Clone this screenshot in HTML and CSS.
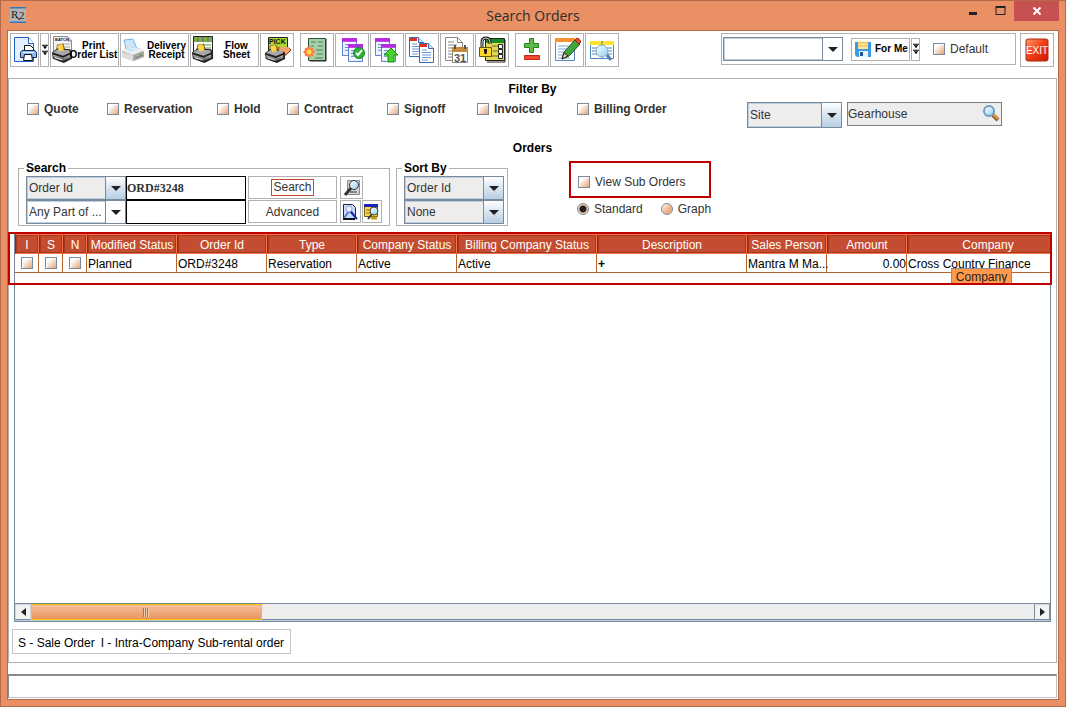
FILE: index.html
```html
<!DOCTYPE html>
<html lang="en">
<head>
<meta charset="utf-8">
<title>Search Orders</title>
<link rel="stylesheet" href="styles.css">
</head>
<body>
<svg class="sprite" aria-hidden="true">
  <defs>
    <linearGradient id="lens" x1="0" y1="0" x2="1" y2="1"><stop offset="0" stop-color="#fff"/><stop offset="1" stop-color="#8fd0ee"/></linearGradient>
    <linearGradient id="steel" x1="0" y1="0" x2="0" y2="1"><stop offset="0" stop-color="#b8b8b8"/><stop offset="1" stop-color="#555"/></linearGradient>
    <linearGradient id="exitred" x1="0" y1="0" x2="1" y2="1"><stop offset="0" stop-color="#ff9a6c"/><stop offset=".5" stop-color="#f03c14"/><stop offset="1" stop-color="#d01800"/></linearGradient>
    <symbol id="printer" viewBox="0 0 24 19" preserveAspectRatio="none">
      <path d="M6 8 7 2l6-1 2 6z" fill="#ffd34a" stroke="#7a5a10"/>
      <path d="M1 9 7 5l14 1 2 3v6l-9 4-12-4z" fill="#222"/>
      <path d="M2 9 7 6l13 1 1 2-8 3z" fill="#a8a8a8"/>
      <path d="M7 4 8 2l4-1 2 6-5 1z" fill="#ffd34a"/>
      <path d="m2 11 11 3 8-3v3l-8 3-10-3z" fill="url(#steel)"/>
      <path d="m4 14 8 2" stroke="#e0e0e0"/>
    </symbol>
    <symbol id="window" viewBox="0 0 16 19">
      <path d="M.5.5h15v18H.5z" fill="#eef5ff" stroke="#4a76c4"/>
      <path d="M0 0h16v4H0z" fill="#b52be0"/>
      <path d="M3 7h4M3 10h4M3 13h4M9 7h4M9 10h4M9 13h4" stroke="#5b86c8"/>
    </symbol>
    <symbol id="page" viewBox="0 0 15 20">
      <path d="M.5.5h9l5 5v14H.5z" fill="#fff" stroke="#3a68b4"/>
      <path d="M9.500.5v5h5" fill="#cfe0fa" stroke="#3a68b4"/>
      <path d="M1 1h7v3H1z" fill="#e03020"/>
      <path d="M3 7h5M3 9.500h9M3 12h9M3 14.500h9M3 17h6" stroke="#6f97d4"/>
    </symbol>
    <symbol id="chevrons" viewBox="0 0 7 12">
      <path d="M0 0h7v1H0zM1 1.500h5L3.500 5zM0 7h7v1H0zM1 8.500h5L3.500 12z" fill="#000"/>
    </symbol>
  </defs>
</svg>

<div class="window">
  <header class="titlebar">
    <svg class="app-icon" viewBox="0 0 16 16" role="img" aria-label="R2">
      <rect width="16" height="16" fill="#b4b4b4"/><path d="M0 0h16v1.500H0zM0 14.500h16V16H0z" fill="#2f78c0"/>
      <text class="app-mark" x="1" y="11">R</text><text class="app-mark" x="9" y="12">2</text><path d="m6 10 4 3" stroke="#222"/>
    </svg>
    <h1 class="title">Search Orders</h1>
    <div class="window-controls">
      <button class="win-btn" aria-label="Minimize"><svg width="9" height="12"><path d="M0 7h8v3H0z" fill="#222"/></svg></button>
      <button class="win-btn" aria-label="Maximize"><svg width="12" height="12"><path d="M1 2.500h9v7H1z" fill="none" stroke="#222"/><path d="M.5 1h10v2H.5z" fill="#222"/></svg></button>
      <button class="win-btn close" aria-label="Close"><svg width="8" height="8"><path d="m.5.5 7 7m0-7-7 7" stroke="#fff" stroke-width="2"/></svg></button>
    </div>
  </header>

  <main class="client">
    <div class="toolbar">
      <div class="tool-group">
        <button class="tool narrow" aria-label="Print"><svg width="24" height="28" viewBox="0 0 24 28"><path d="M1.500 1.500h14l5 6v18h-19z" fill="#e3efff" stroke="#1f5fc4"/><path d="M15.500 1.500v6h5" fill="#fff" stroke="#1f5fc4"/><path d="M11.500 9.500h6l3 3v5h-9z" fill="#fff" stroke="#111"/><path d="M9 14.500h13l1.500 2v5H7.500v-5z" fill="#8fb8ee" stroke="#12305e"/><path d="M11.500 18.500h7l1 6h-9z" fill="#fff" stroke="#111"/><path d="M10 16.500h11" stroke="#e4efff"/></svg></button>
        <button class="tool drop" aria-label="Print menu"><svg width="6" height="12"><use href="#chevrons"/></svg></button>
        <button class="tool wide"><svg width="24" height="28" viewBox="0 0 24 28"><path d="M2.500.5h14l4 4v18h-18z" fill="#f3f3f3" stroke="#888"/><path d="M17 1v4h4" fill="#ccc" stroke="#888"/><text class="tiny-mark" x="4" y="5">BATCH</text><path d="M11 8h8M12 11h7M15 14h4" stroke="#aaa"/><use href="#printer" y="7" width="22" height="20"/></svg><span class="caption overlap">Print<br>Order List</span></button>
        <button class="tool wide"><svg width="24" height="24" viewBox="0 0 24 24"><path d="m5 11-2-9 9-1 4 10z" fill="#c9e6fc" stroke="#78b4e0"/><path d="m1 13 7-4 13 2 2 3v5l-10 4L1 19z" fill="#a8a8a8"/><path d="m1 13 7-4 13 2 1 2-10 4z" fill="#eee"/><path d="M1 14v5l11 4v-6z" fill="#dcdcdc"/><path d="m5 12 2-2 8 1-4 3z" fill="#c9e6fc"/><circle cx="19" cy="16" r="1" fill="#44c030"/><path d="m14 20 8-3" stroke="#777"/></svg><span class="caption">Delivery<br>Receipt</span></button>
        <button class="tool wide"><svg width="24" height="28" viewBox="0 0 24 28"><path d="M2.500.5h19v16h-19z" fill="#fff" stroke="#222"/><path d="M3 1h18v5H3z" fill="#7fae3a"/><path d="M7 1v5M12 1v5M17 1v5" stroke="#5560a8"/><path d="M12 9h8M14 12h6" stroke="#4a9b42"/><use href="#printer" y="7" width="23" height="20"/></svg><span class="caption">Flow<br>Sheet</span></button>
        <button class="tool" aria-label="Pick"><svg width="28" height="28" viewBox="0 0 28 28"><path d="M5.500 1.500h19v14h-19z" fill="#a9d92f" stroke="#222"/><text class="pick-mark" x="6" y="8">PICK</text><path d="M14 12h12l2 2-5 5h-7z" fill="#f1a46b" stroke="#8c3a16"/><use href="#printer" x="1" y="8" width="22" height="19"/><path d="M17 11h9l1 3-5 2-6-1z" fill="#f1a46b"/></svg></button>
      </div>
      <div class="tool-group">
        <button class="tool" aria-label="Order sheet"><svg width="28" height="28" viewBox="0 0 28 28"><path d="M5.500 2.500h17v22h-17z" fill="#a5cfa8" stroke="#33523a"/><path d="M23 3v22H7" fill="none" stroke="#222"/><path d="M8 6h5M15 6h5M8 10h3M15 10h5M13 14h7M14 18h6M12 22h8" stroke="#4d8258"/><circle cx="6" cy="16" r="5" fill="#ff8b50"/><path d="M6 10v12M0 16h12M2 12l8 8M10 12l-8 8" stroke="#ff6a38"/><circle cx="6" cy="16" r="2.500" fill="#ffd94a"/></svg></button>
        <button class="tool" aria-label="Approve orders"><svg width="28" height="28" viewBox="0 0 28 28"><use href="#window" x="4" y="2" width="15" height="18"/><use href="#window" x="10" y="8" width="15" height="18"/><circle cx="21" cy="17" r="5.500" fill="#2fb437" stroke="#148420"/><path d="m18 17 2 2 4-5" fill="none" stroke="#fff" stroke-width="2"/></svg></button>
        <button class="tool" aria-label="Upload orders"><svg width="28" height="28" viewBox="0 0 28 28"><use href="#window" x="2" y="2" width="15" height="18"/><use href="#window" x="8" y="8" width="15" height="18"/><path d="m18 12 7 7h-4v7h-6v-7h-4z" fill="#47d32a" stroke="#208c12"/></svg></button>
        <button class="tool" aria-label="Copy"><svg width="28" height="28" viewBox="0 0 28 28"><use href="#page" x="1" y="1" width="15" height="20"/><use href="#page" x="11" y="7" width="15" height="20"/></svg></button>
        <button class="tool" aria-label="Schedule"><svg width="28" height="28" viewBox="0 0 28 28"><path d="M2.500 1.500h12l5 5v18h-17z" fill="#fff" stroke="#888"/><path d="M14.500 1.500v5h5M5 6h6M5 9h9M5 12h5M5 15h5M5 18h5M5 21h5" fill="none" stroke="#888"/><path d="M9.500 11.500h15v15h-15z" fill="#fff" stroke="#888"/><path d="M9 11h16v5H9z" fill="#c58a38"/><path d="M12 9v4M22 9v4" stroke="#555" stroke-width="2"/><text class="cal-mark" x="11" y="26">31</text></svg></button>
        <button class="tool" aria-label="Lock order"><svg width="28" height="28" viewBox="0 0 28 28"><path d="M7.500 2.500h19v22h-19z" fill="#e0d84e" stroke="#222"/><path d="M27 4v22H9" fill="none" stroke="#222"/><path d="M8 3h18v4H8z" fill="#148c24"/><path d="M14 10h6M15 15h5M14 20h6" stroke="#6b6720"/><path d="M20.500 8.500h4v4h-4zM20.500 13.500h4v4h-4zM20.500 18.500h4v4h-4z" fill="#fff" stroke="#222"/><path d="M4 11V6q0-4 4-4t4 4v2" fill="none" stroke="#222" stroke-width="3"/><path d="M4 11V6q0-4 4-4t4 4v2" fill="none" stroke="#c8c8c8"/><path d="M1.500 11.500h12v9h-12z" fill="#ffd42a" stroke="#6c5500"/><path d="M6 13h3v2L8.500 18h-2L6 15z" fill="#111"/></svg></button>
      </div>
      <div class="tool-group">
        <button class="tool" aria-label="Add or remove"><svg width="28" height="28" viewBox="0 0 28 28"><path d="M11.500 2.500h4v5h5v4h-5v5h-4v-5h-5v-4h5z" fill="#5cbc48" stroke="#258024"/><path d="M6.500 19.500h15v4h-15z" fill="#ef4a2c" stroke="#c22814"/></svg></button>
        <button class="tool" aria-label="Edit"><svg width="28" height="28" viewBox="0 0 28 28"><path d="M2.500 2.500h19v22h-19z" fill="#fff" stroke="#5b86c0"/><path d="M2 2h20v4H2z" fill="#ff8f35"/><path d="M5 10h11M5 13h10M5 16h7M5 19h5M5 22h12" stroke="#79a5dc"/><path d="m9 23 2-7L22 4l5 4-11 12z" fill="#3fa63c" stroke="#234d20"/><path d="m22 4 4 4 2-2q-1-3-4-4z" fill="#ef4a3a" stroke="#8e2118"/><path d="m9 23 2-6 4 3z" fill="#f4d0a0" stroke="#222"/></svg></button>
        <button class="tool" aria-label="Preview"><svg width="28" height="28" viewBox="0 0 28 28"><path d="M2.500 5.500h23v17h-23z" fill="#fff" stroke="#4a86c8"/><path d="M2 5h24v4H2z" fill="#ffe32a"/><path d="M14 5v18M4 12h7M4 15h6M4 18h7M19 12h5M20 15h4M19 18h5" stroke="#4a86c8"/><circle cx="14" cy="15" r="6" fill="url(#lens)" stroke="#8aa8bd"/><path d="m19 19 4 5" stroke="#5a7eb0" stroke-width="3"/></svg></button>
      </div>

      <div class="profile">
        <span class="combo profile-combo"><select aria-label="Saved profile"><option></option></select></span>
        <button class="for-me"><svg width="16" height="16" viewBox="0 0 16 16"><path d="M0 1h16v15H2l-2-2z" fill="#3c9be0"/><path d="M3 0h10v8H3z" fill="#ffe6a0"/><path d="M3 2h10M3 5h10" stroke="#f2b845"/><path d="M4 10h9v6H4z" fill="#e8f4ff"/><path d="M5 11h3v4H5z" fill="#1d5b96"/></svg>For Me</button>
        <button class="for-me-drop" aria-label="Save menu"><svg width="6" height="12"><use href="#chevrons"/></svg></button>
        <label class="check default"><input type="checkbox">Default</label>
      </div>
      <button class="tool exit" aria-label="Exit"><svg width="24" height="24" viewBox="0 0 24 24"><rect x="1" y="1" width="22" height="22" rx="2" fill="url(#exitred)" stroke="#a82810"/><text class="exit-mark" x="12" y="16">EXIT</text></svg></button>
    </div>

    <section class="panel">
      <h2 class="heading">Filter By</h2>
      <div class="filters">
        <label class="check w80"><input type="checkbox">Quote</label>
        <label class="check w110"><input type="checkbox">Reservation</label>
        <label class="check w70"><input type="checkbox">Hold</label>
        <label class="check w100"><input type="checkbox">Contract</label>
        <label class="check w90"><input type="checkbox">Signoff</label>
        <label class="check w100"><input type="checkbox">Invoiced</label>
        <label class="check"><input type="checkbox">Billing Order</label>
        <div class="site">
          <span class="combo shaded site-combo"><select aria-label="Scope"><option>Site</option></select></span>
          <span class="lookup"><input type="text" value="Gearhouse" aria-label="Site name"><button aria-label="Look up site"><svg width="18" height="18" viewBox="0 0 18 18"><path d="m11 11 5 5" stroke="#8b5a2b" stroke-width="4"/><path d="m11 10 5 5" stroke="#f09a3c" stroke-width="2"/><circle cx="7" cy="7" r="5" fill="url(#lens)" stroke="#6f9cc0" stroke-width="2"/></svg></button></span>
        </div>
      </div>

      <h2 class="heading">Orders</h2>
      <div class="criteria">
        <fieldset class="group">
          <legend>Search</legend>
          <div class="search-grid">
            <span class="combo shaded"><select aria-label="Search field"><option>Order Id</option></select></span>
            <input class="term" type="text" value="ORD#3248" aria-label="Search text">
            <button class="plain"><span class="focus">Search</span></button>
            <div class="icons"><button class="mini" aria-label="Find"><svg width="18" height="18" viewBox="0 0 18 18"><path d="M4.500 1.500h12v14h-12z" fill="#d5d5d5" stroke="#888"/><path d="M7 13h7" stroke="#333"/><path d="m8 9-6 7" stroke="#333" stroke-width="3"/><circle cx="11" cy="6" r="4.500" fill="url(#lens)" stroke="#333"/></svg></button></div>
            <span class="combo"><select aria-label="Match mode"><option>Any Part of ...</option></select></span>
            <input class="term" type="text" aria-label="Second search text">
            <button class="plain">Advanced</button>
            <div class="icons">
              <button class="mini" aria-label="Clear search"><svg width="18" height="18" viewBox="0 0 18 18"><path d="M2.500 1.500h9l3 3v11h-12z" fill="#c9d9ff" stroke="#222"/><path d="m3 15 6-8 4 5" fill="none" stroke="#5b78c8" stroke-width="2"/><path d="m9 8 7 8" stroke="#1a2fa0" stroke-width="2"/><circle cx="8" cy="6" r="3" fill="#eef4ff" stroke="#8fa4d8"/><path d="M2 16h12" stroke="#111" stroke-width="2"/></svg></button>
              <button class="mini" aria-label="Saved searches"><svg width="18" height="18" viewBox="0 0 18 18"><path d="M1.500 1.500h13v12h-13z" fill="#ffd84a" stroke="#6e5a14"/><path d="M1 1h14v3H1z" fill="#1a24b8"/><path d="M3 7h4M3 10h4" stroke="#8a6a10"/><path d="M8 15h6" stroke="#c49a14" stroke-width="3"/><path d="m9 11-4 5" stroke="#333" stroke-width="2"/><circle cx="11" cy="8" r="4" fill="url(#lens)" stroke="#444"/></svg></button>
            </div>
          </div>
        </fieldset>
        <fieldset class="group">
          <legend>Sort By</legend>
          <div class="sort-grid">
            <span class="combo shaded"><select aria-label="First sort"><option>Order Id</option></select></span>
            <span class="combo shaded"><select aria-label="Second sort"><option>None</option></select></span>
          </div>
        </fieldset>
        <div class="view">
          <div class="sub-orders"><label class="check"><input type="checkbox">View Sub Orders</label></div>
          <div class="modes">
            <label class="check"><input type="radio" name="mode" checked>Standard</label>
            <label class="check"><input type="radio" name="mode">Graph</label>
          </div>
        </div>
      </div>

      <div class="results">
        <div class="pane">
          <div class="table-view">
            <table class="orders">
              <colgroup><col class="c24"><col class="c24"><col class="c24"><col class="c90"><col class="c90"><col class="c90"><col class="c100"><col class="c140"><col class="c150"><col class="c80"><col class="c80"><col></colgroup>
              <thead><tr><th>I</th><th>S</th><th>N</th><th>Modified Status</th><th>Order Id</th><th>Type</th><th>Company Status</th><th>Billing Company Status</th><th>Description</th><th>Sales Person</th><th>Amount</th><th>Company</th></tr></thead>
              <tbody><tr>
                <td class="tick"><input type="checkbox" aria-label="Intra-company"></td>
                <td class="tick"><input type="checkbox" aria-label="Sale"></td>
                <td class="tick"><input type="checkbox" aria-label="N"></td>
                <td>Planned</td><td>ORD#3248</td><td>Reservation</td><td>Active</td><td>Active</td><td><b>+</b></td><td>Mantra M Ma...</td><td class="num">0.00</td><td>Cross Country Finance</td>
              </tr></tbody>
            </table>
          </div>
          <div class="scrollbar">
            <button class="arrow" aria-label="Scroll left"><svg width="5" height="8"><path d="M5 0v8L0 4z" fill="#222"/></svg></button>
            <div class="track"><div class="thumb"><span class="grip"></span></div></div>
            <button class="arrow right" aria-label="Scroll right"><svg width="5" height="8"><path d="M0 0v8l5-4z" fill="#222"/></svg></button>
          </div>
        </div>
        <div class="tooltip">Company</div>
        <div class="highlight"></div>
      </div>

      <p class="key"><span>S - Sale Order</span><span>I - Intra-Company Sub-rental order</span></p>
    </section>
    <input class="status" type="text" readonly aria-label="Status">
  </main>
</div>
</body>
</html>
```

FILE: styles.css
```css
* { box-sizing: border-box; }
body {
  margin: 0;
  font: 12px/16px "Liberation Sans", Arial, sans-serif;
  color: #333;
}
button, input, select { font: inherit; color: inherit; margin: 0; padding: 0; border-radius: 0; }
button { background: #fff; border: 1px solid #b0b0b0; }
h1, h2, p { margin: 0; }
svg { display: block; flex: none; }
.sprite { position: absolute; width: 0; height: 0; }

.window {
  min-height: 100vh;
  display: flex;
  flex-direction: column;
  padding: 0 6px 6px;
  background: #e99065;
  border: 1px solid #b36a4b;
}

/* Title bar */
.titlebar {
  display: grid;
  grid-template-columns: 1fr auto 1fr;
  align-items: start;
  height: 29px;
}
.app-icon { width: 16px; height: 16px; margin: 6px 0 0 3px; }
.app-mark { font: 11px "Liberation Serif", serif; fill: #222; }
.title { font: 14px/30px "Open Sans", sans-serif; color: #2b2b2b; }
.window-controls { display: flex; justify-content: flex-end; }
.win-btn {
  display: flex;
  align-items: center;
  justify-content: center;
  width: 27px;
  height: 20px;
  background: none;
  border: 0;
}
.win-btn.close { width: 45px; background: #c75050; }

.client {
  flex: 1;
  display: flex;
  flex-direction: column;
  background: #fff;
  border: 1px solid #b9694a;
}

/* Toolbar */
.toolbar { display: flex; padding: 2px 4px 11px 2px; }
.tool-group { display: flex; gap: 1px; margin-right: 6px; }
.tool {
  display: flex;
  align-items: center;
  justify-content: center;
  width: 34px;
  height: 34px;
  overflow: hidden;
}
.tool.narrow { width: 29px; }
.tool.drop { width: 9px; }
.tool.wide { width: 69px; justify-content: flex-start; }
.caption {
  flex: 1;
  font-weight: bold;
  font-size: 10px;
  line-height: 9px;
  color: #000;
  text-align: center;
  white-space: nowrap;
}
.caption.overlap { margin-left: -6px; }
.tiny-mark { font: bold 4px "Liberation Sans", sans-serif; fill: #111; }
.pick-mark { font: bold 7px "Liberation Sans", sans-serif; fill: #111; }
.cal-mark { font: bold 11px "Liberation Sans", sans-serif; fill: #555; }
.exit-mark { font: 10px "Liberation Sans", sans-serif; fill: #fff; text-anchor: middle; }
.profile {
  display: flex;
  align-items: center;
  width: 295px;
  height: 32px;
  margin: 0 4px 0 auto;
  padding: 0 1px;
  border: 1px solid #b0b0b0;
}
.profile-combo { width: 120px; height: 24px; }
.for-me {
  display: flex;
  align-items: center;
  gap: 4px;
  width: 59px;
  height: 23px;
  margin-left: 8px;
  padding-left: 3px;
  font-weight: bold;
  font-size: 10px;
  color: #000;
  white-space: nowrap;
}
.for-me-drop {
  display: flex;
  align-items: center;
  justify-content: center;
  width: 9px;
  height: 23px;
  margin-left: 1px;
}
.default { margin-left: 13px; }

/* Form controls */
.combo { position: relative; display: block; }
.combo select {
  appearance: none;
  display: block;
  width: 100%;
  height: 100%;
  padding: 0 20px 0 2px;
  background: #fff;
  border: 1px solid #7a8a99;
  box-shadow: inset 0 0 0 1px #b8cfe5;
}
.combo.shaded select { background: #ededed; }
.combo::before {
  content: "";
  position: absolute;
  top: 1px;
  right: 1px;
  bottom: 1px;
  width: 19px;
  background: #fff;
  border-left: 1px solid #7a8a99;
  pointer-events: none;
}
.combo.shaded::before { background: linear-gradient(#fff, #dfe9f3 40%, #b8cfe5); }
.combo::after {
  content: "";
  position: absolute;
  top: calc(50% - 2px);
  right: 5px;
  border: 5px solid transparent;
  border-top-color: #222;
  border-bottom: 0;
  pointer-events: none;
}
.check { display: flex; align-items: center; gap: 5px; height: 20px; white-space: nowrap; }
input[type="checkbox"], input[type="radio"] {
  appearance: none;
  flex: none;
  width: 12px;
  height: 12px;
  border: 1px solid #7a8a99;
  background: linear-gradient(135deg, #fff 25%, #e8a274);
  box-shadow: inset 1px 1px 0 #fff;
}
input[type="radio"] { border-radius: 50%; box-shadow: none; background: linear-gradient(135deg, #fff, #f0b088 60%); }
input[type="radio"]:checked { background: radial-gradient(circle, #222 3px, #f5c9ac 4px); }

/* Panel */
.panel {
  flex: 1;
  display: flex;
  flex-direction: column;
  margin: 0 1px 11px 0;
  padding: 0 5px 8px;
  border: 1px solid #b0b0b0;
}
.heading { font-size: 12px; line-height: 20px; color: #000; text-align: center; }
.filters {
  display: flex;
  align-items: flex-start;
  height: 39px;
  padding: 0 49px 0 13px;
  font-weight: bold;
}
.w70 { width: 70px; }
.w80 { width: 80px; }
.w90 { width: 90px; }
.w100 { width: 100px; }
.w110 { width: 110px; }
.site { display: flex; gap: 5px; margin-left: auto; padding-top: 3px; font-weight: normal; }
.site-combo { width: 95px; height: 26px; }
.lookup {
  display: flex;
  width: 155px;
  height: 24px;
  background: #ededed;
  border: 1px solid #808080;
}
.lookup input { flex: 1; min-width: 0; background: none; border: 0; }
.lookup button { padding: 0 1px 3px; background: none; border: 0; }

.criteria { display: flex; align-items: flex-start; gap: 6px; padding: 2px 0 6px 4px; }
.group { margin: 0; padding: 0 1px 1px 7px; border: 1px solid #b0b0b0; min-width: 0; }
.group legend { margin-left: -2px; padding: 0 2px; font-weight: bold; color: #000; }
.search-grid { display: grid; grid-template: 24px 24px / 100px 120px 89px 47px; width: 362px; }
.search-grid .plain { margin: 0 0 1px 2px; width: 89px; }
.focus { display: inline-block; padding: 0 1px; line-height: 15px; border: 1px solid #c44c30; }
.icons { display: flex; gap: 1px; padding: 0 0 1px 5px; }
.mini { display: flex; align-items: center; justify-content: center; width: 23px; height: 23px; }
.term {
  min-width: 0;
  border: 1px solid #000;
  font: bold 12px "Liberation Serif", "Times New Roman", serif;
}
.sort-grid { display: grid; grid-template: 24px 24px / 100px; width: 102px; }
.view { margin-left: 55px; }
.sub-orders {
  display: flex;
  align-items: center;
  width: 142px;
  height: 37px;
  margin-top: 1px;
  padding: 5px 0 0 7px;
  border: 2px solid #c00000;
}
.modes { display: flex; gap: 18px; padding: 1px 0 0 8px; }

/* Results */
.results { position: relative; flex: 1; display: flex; }
.pane {
  flex: 1;
  min-width: 0;
  display: flex;
  flex-direction: column;
  padding: 1px 0 0;
  border: 1px solid #7a8a99;
}
.table-view { flex: 1; overflow: hidden; }
.orders {
  width: max(100%, 1054px);
  table-layout: fixed;
  border-spacing: 0;
  color: #000;
}
.c24 { width: 24px; }
.c80 { width: 80px; }
.c90 { width: 90px; }
.c100 { width: 100px; }
.c140 { width: 140px; }
.c150 { width: 150px; }
.orders th {
  height: 20px;
  padding: 2px 0 0;
  font-weight: normal;
  color: #fff;
  background: #c44c30;
  border: 1px solid #ff7446;
  border-left-color: #8a2c18;
  box-shadow: inset 0 0 0 1px #a03a22;
  white-space: nowrap;
}
.orders td {
  height: 19px;
  padding: 1px 0 0 1px;
  border: 0 solid #b4652f;
  border-width: 0 1px 1px 0;
  white-space: nowrap;
}
.orders .tick { padding: 0; }
.tick input { display: block; margin: 0 auto; }
.orders .num { text-align: right; }
.highlight {
  position: absolute;
  top: 0;
  left: -6px;
  right: -1px;
  height: 53px;
  border: 2px solid #c00000;
  pointer-events: none;
}
.tooltip {
  position: absolute;
  top: 36px;
  right: 39px;
  width: 61px;
  height: 16px;
  color: #222;
  line-height: 17px;
  text-align: center;
  background: #ff9a4d;
  border: 1px solid #8a8a99;
}

.scrollbar { display: flex; height: 18px; border-top: 1px solid #7a8a99; background: #b8cfe5; }
.arrow {
  display: flex;
  align-items: center;
  justify-content: center;
  width: 16px;
  height: 16px;
  background: #f2f2f2;
  border: 1px solid #d5d5d5;
  border-bottom-color: #7a8a99;
}
.arrow.right { border-left-color: #7a8a99; border-right-color: #7a8a99; }
.track { flex: 1; height: 16px; background: #ededed; box-shadow: inset 0 -1px #7a8a99; }
.thumb {
  display: flex;
  align-items: center;
  justify-content: center;
  width: 23%;
  height: 16px;
  background: linear-gradient(#f3c09c, #e89460);
  border: 1px solid #ffc000;
}
.grip { width: 6px; height: 9px; background: repeating-linear-gradient(90deg, #8d7a78 0 1px, #f5cdb0 1px 2px); }

.key {
  display: flex;
  align-self: flex-start;
  gap: 6px;
  margin: 7px 0 0 -2px;
  padding: 5px 6px 2px 5px;
  color: #000;
  border: 1px solid #c4c4c4;
}
.status {
  height: 24px;
  margin: 0 1px 1px 0;
  border: 1px solid #c0c0c0;
  border-top: 2px solid #8a8a8a;
  border-left-color: #8a8a8a;
  background: #fff;
}
```
